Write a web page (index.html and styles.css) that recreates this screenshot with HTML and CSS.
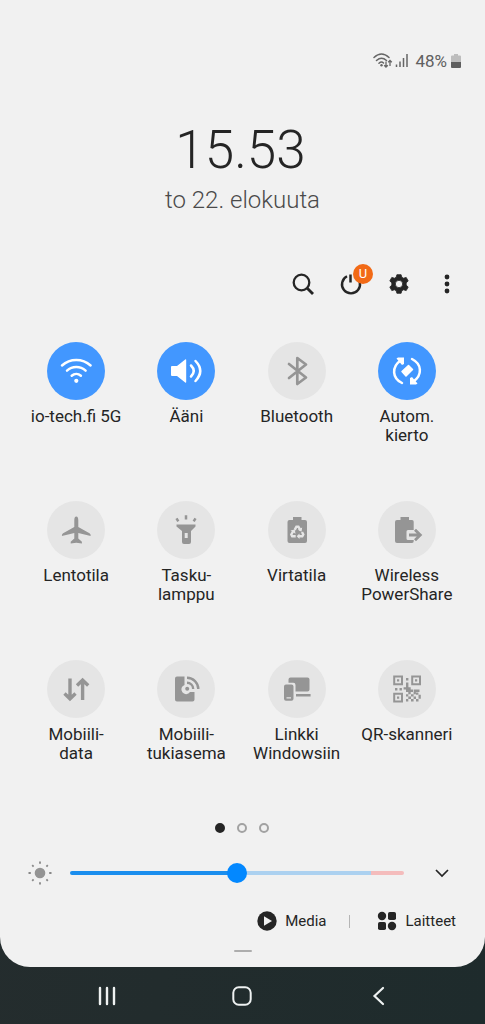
FILE: index.html
```html
<!DOCTYPE html>
<html lang="fi">
<head>
<meta charset="utf-8">
<meta name="viewport" content="width=device-width, initial-scale=1">
<title>Pika-asetukset</title>
<link rel="stylesheet" href="styles.css">
</head>
<body>
<main class="panel">
  <div class="status">
    <svg class="status-wifi" viewBox="0 0 20 18" aria-hidden="true">
      <g fill="none" stroke="#666" stroke-width="1.5" stroke-linecap="round">
        <path d="M1 5.500Q8.500-1.500 16 5.500M3.500 8.500Q8.500 4 13.500 8.500M6 11.300Q8.500 9 10.500 11"/>
      </g>
      <circle cx="8.500" cy="13.300" r="1.200" fill="#666"/>
      <path d="M13 9.500v5.500M11.200 13.200 13 15l1.800-1.800M17 14V8.500M15.200 10.300 17 8.500l1.800 1.800" fill="none" stroke="#666" stroke-width="1.300"/>
    </svg>
    <svg class="status-signal" viewBox="0 0 14 18" aria-hidden="true">
      <path d="M1.500 12.500V15M5 9.500V15M8.500 6V15M12 2V15" stroke="#666" stroke-width="1.500"/>
    </svg>
    <span class="status-text">48%</span>
    <svg class="status-battery" viewBox="0 0 10 18" aria-hidden="true">
      <path d="M3 2h4v1.500h2q1 0 1 1V10H0V4.500q0-1 1-1h2z" fill="#bdbdbd"/>
      <path d="M0 10h10v5q0 1-1 1H1q-1 0-1-1z" fill="#5e5e5e"/>
    </svg>
  </div>

  <header class="clock">
    <time class="clock-time">15.53</time>
    <p class="clock-date">to 22. elokuuta</p>
  </header>

  <div class="actions">
    <button class="action" aria-label="Haku">
      <svg viewBox="0 0 24 24"><circle cx="10.500" cy="10.500" r="7.800" fill="none" stroke="#252525" stroke-width="2.300"/><path d="m16 16 6 6" stroke="#252525" stroke-width="2.800"/></svg>
    </button>
    <button class="action" aria-label="Virta">
      <svg viewBox="0 0 24 24"><path d="M8 4.300A9 9 0 1 0 16 4.300" fill="none" stroke="#252525" stroke-width="2.400"/><path d="M11.500 2.500v8" stroke="#252525" stroke-width="2.500"/></svg>
      <span class="badge">U</span>
    </button>
    <button class="action" aria-label="Asetukset">
      <svg viewBox="0 0 24 24"><path fill="#252525" fill-rule="evenodd" stroke="#252525" stroke-width=".8" stroke-linejoin="round" d="M9.900 2.700h4.200l.7 2.500 1.700 1 2.700-.8 2 3.500-2 2v2.200l2 2-2 3.500-2.700-.8-1.700 1-.7 2.500H9.900l-.7-2.500-1.700-1-2.700.8-2-3.500 2-2v-2.200l-2-2 2-3.500 2.700.8 1.700-1zM12 8.300a3.700 3.700 0 1 0 0 7.400 3.700 3.700 0 0 0 0-7.400z"/></svg>
    </button>
    <button class="action" aria-label="Lisää">
      <svg viewBox="0 0 24 24"><g fill="#252525"><circle cx="12" cy="5" r="2.400"/><circle cx="12" cy="12" r="2.400"/><circle cx="12" cy="19" r="2.400"/></g></svg>
    </button>
  </div>

  <section class="tiles" aria-label="Pikavalinnat">
    <button class="tile tile-on">
      <svg class="tile-icon" viewBox="0 0 58 58"><g fill="none" stroke="currentColor" stroke-width="2.500" stroke-linecap="round"><path d="M15 23.500a21.500 21.500 0 0 1 28.600 0M20 28.600a14 14 0 0 1 18.600 0M24.700 33.700a7 7 0 0 1 9.200 0"/></g><circle cx="29.300" cy="38.800" r="2.100" fill="currentColor"/></svg>
      <span class="tile-label">io-tech.fi 5G</span>
    </button>
    <button class="tile tile-on">
      <svg class="tile-icon" viewBox="0 0 58 58"><path fill="currentColor" d="M15 24h5l8.200-6.600q1-.6 1 .6v22q0 1.200-1 .6L20 34h-5q-1 0-1-1v-8q0-1 1-1z"/><path d="M34 23.500q5.500 5.500 0 11M38.500 19q9.500 9.700 0 20" fill="none" stroke="currentColor" stroke-width="2.500" stroke-linecap="round"/></svg>
      <span class="tile-label">Ääni</span>
    </button>
    <button class="tile">
      <svg class="tile-icon" viewBox="0 0 58 58"><path d="m21 22 17 13.500-8.700 6.500V16l8.700 6.500L21 36" fill="none" stroke="currentColor" stroke-width="2.700" stroke-linejoin="round" stroke-linecap="round"/></svg>
      <span class="tile-label">Bluetooth</span>
    </button>
    <button class="tile tile-on">
      <svg class="tile-icon" viewBox="0 0 58 58"><path d="M24 41C14 36 13.500 25 22.500 18.500M34 17C44 22 44.500 33 35.500 39.500" fill="none" stroke="currentColor" stroke-width="2.500" stroke-linecap="round"/><path fill="currentColor" d="M18.500 16.500 20 15.500h6v6.500l-2 1zM39.500 41.500l-1.500 1h-6V36l2-1z"/><path d="m30.500 23.500 4 4-6.500 6.500-4-4.500z" fill="currentColor" stroke="currentColor" stroke-width="1.500" stroke-linejoin="round"/></svg>
      <span class="tile-label">Autom.<br>kierto</span>
    </button>

    <button class="tile">
      <svg class="tile-icon" viewBox="0 0 58 58"><path fill="currentColor" d="M29.300 15.500c1.300 0 2 1.500 2 4v6.500l11.200 6.200q1.300.7 1.200 2.800l-12.400-3v5.500l3.600 3.200v1.800l-5.600-.8-5.600.8v-1.800l3.600-3.200V32l-12.400 3q-.1-2.100 1.200-2.800l11.200-6.200v-6.500c0-2.500.7-4 2-4z"/></svg>
      <span class="tile-label">Lentotila</span>
    </button>
    <button class="tile">
      <svg class="tile-icon" viewBox="0 0 58 58"><path fill="currentColor" fill-rule="evenodd" d="M19.500 23.500h19v2L34 30v11q0 2-2 2h-5q-2 0-2-2V30l-5.500-4.500zM27.700 32v5h3v-5z"/><path d="M29 14.300v4.200M19.500 17.300l1.800 3M38.500 17.300l-1.800 3" stroke="currentColor" stroke-width="2.500"/></svg>
      <span class="tile-label">Tasku-<br>lamppu</span>
    </button>
    <button class="tile">
      <svg class="tile-icon" viewBox="0 0 58 58"><path fill="currentColor" d="M25 16h8.500v3H37q2 0 2 2v19q0 2-2 2H21.500q-2 0-2-2V21q0-2 2-2H25z"/><g fill="none" stroke="#e5e5e5" stroke-width="2.400"><path d="m26.700 28.800 1.700-3.100h2l2 3.500M34 31l1.300 2.500-1 1.800h-4M27.700 35.300h-3.500l-.9-1.800 2-3.500"/></g><path fill="#e5e5e5" d="m34.200 26.500-.7 4.300-3.700-2zM31.500 32.500v5.600L28.700 35.300zM22.500 29.500l4.300-1 .7 4.200z"/></svg>
      <span class="tile-label">Virtatila</span>
    </button>
    <button class="tile">
      <svg class="tile-icon" viewBox="0 0 58 58"><path fill="currentColor" d="M22.500 16H31v3h3q1.700 0 1.700 1.700V29H30q-1.500 0-1.500 1.500v7q0 1.500 1.500 1.500h5.700v1.300q0 1.700-1.700 1.700H19q-2 0-2-2V21q0-2 2-2h3.500z"/><path d="M31 34h11.500M37 28.800l5.300 5.200-5.300 5.200" fill="none" stroke="currentColor" stroke-width="2.800"/></svg>
      <span class="tile-label">Wireless<br>PowerShare</span>
    </button>

    <button class="tile">
      <svg class="tile-icon" viewBox="0 0 58 58"><path d="M23 18.500V38M17.500 33.500l5.500 5.300 5.500-5.300M35.600 40V20.500M30 25.500l5.600-5.300 5.600 5.300" fill="none" stroke="currentColor" stroke-width="3.400"/></svg>
      <span class="tile-label">Mobiili-<br>data</span>
    </button>
    <button class="tile">
      <svg class="tile-icon" viewBox="0 0 58 58"><path fill="currentColor" d="M20 16.500h7.500V25A4.700 4.700 0 1 0 33 32h4.500v7.500q0 2-2 2H20q-2 0-2-2v-21q0-2 2-2z"/><circle cx="30.200" cy="28.700" r="2" fill="currentColor"/><path d="M30 22.700a6.200 6.200 0 0 1 6.200 6.200M30 17.800A11.200 11.200 0 0 1 41.300 29" fill="none" stroke="currentColor" stroke-width="2.400"/></svg>
      <span class="tile-label">Mobiili-<br>tukiasema</span>
    </button>
    <button class="tile">
      <svg class="tile-icon" viewBox="0 0 58 58"><path fill="currentColor" d="M20.500 22.800V19.500q0-2 2-2H39.500q2 0 2 2v10q0 2-2 2H27.500V25q0-2.200-2.200-2.200z"/><path fill="currentColor" fill-rule="evenodd" d="M18 24.500h5.500q2 0 2 2v12.200q0 2-2 2H18q-2 0-2-2V26.500q0-2 2-2zm.5 12.700v1.300H23v-1.300z"/><path d="M28 35.300h14.600" stroke="currentColor" stroke-width="2.400"/></svg>
      <span class="tile-label">Linkki<br>Windowsiin</span>
    </button>
    <button class="tile">
      <svg class="tile-icon" viewBox="0 0 58 58"><g fill="none" stroke="currentColor" stroke-width="2"><path d="M16.200 16.500h7.800v7.800h-7.800zM34.200 16.500H42v7.800h-7.800zM16.200 33.800h7.800v7.800h-7.800z"/></g><path fill="currentColor" d="M19 19.300h2.200v2.200H19zM37 19.300h2.200v2.200H37zM19 36.600h2.200v2.200H19zM28 18h2.400v2.400H28zM28 22.500h2.400v4.700h2.300v2.300h2.600v2.400h-2.600v2.400h-2.400v-2.400H28v-2.400h-2.400v-2.300H28zM17 28h2.400v2.400H17zM21.500 28h2.400v2.400h-2.400zM36 29.500h5.500v2.400H36zM28 34.200h2.300v2.400H28zM33 34.200h2.600v2.400H33zM38 32.500h2.400v2.300H38zM40.500 34.800h2.300v4h-2.300zM30.300 36.600h2.700V39h-2.700zM35.600 36.600H38V39h-2.400zM28 39h2.300v2.600H28zM33 39h2.600v2.600H33zM38 39h2.500v2.600H38zM35.600 31.900h2.300v2.300h-2.300z"/></svg>
      <span class="tile-label">QR-skanneri</span>
    </button>
  </section>

  <div class="pager" aria-label="Sivu 1/3"><i class="dot dot-current"></i><i class="dot"></i><i class="dot"></i></div>

  <div class="brightness">
    <svg class="sun" viewBox="0 0 24 24" aria-hidden="true"><circle cx="12" cy="12" r="5.300" fill="#949494"/><path d="M12 .5v2.300M12 21.200v2.300M.5 12h2.300M21.200 12h2.300M4.200 4.200l1.400 1.400M18.400 18.400l1.400 1.400M19.800 4.200l-1.400 1.400M5.600 18.400l-1.400 1.400" stroke="#888" stroke-width="1.800"/></svg>
    <input class="slider" type="range" min="0" max="100" value="50" aria-label="Kirkkaus">
    <button class="expand" aria-label="Laajenna"><svg viewBox="0 0 16 16"><path d="m2 5 6 6 6-6" fill="none" stroke="#252525" stroke-width="1.700"/></svg></button>
  </div>

  <div class="shortcuts">
    <button class="shortcut">
      <svg viewBox="0 0 20 20"><circle cx="10" cy="10" r="9.700" fill="#252525"/><path d="m7 5.300 8 4.700-8 4.700z" fill="#f1f1f1"/></svg>
      <span>Media</span>
    </button>
    <i class="divider"></i>
    <button class="shortcut">
      <svg viewBox="0 0 20 20"><g fill="#252525"><circle cx="5" cy="5" r="4.200"/><rect x="11" y="1" width="8" height="8" rx="1.800"/><rect x="1" y="11" width="8" height="8" rx="1.800"/><circle cx="15" cy="15" r="4.200"/></g></svg>
      <span>Laitteet</span>
    </button>
  </div>
  <div class="handle"></div>
</main>

<nav class="navbar">
  <button class="nav" aria-label="Viimeisimmät"><svg viewBox="0 0 24 24"><path d="M5 4v16M12 4v16M19 4v16" stroke="#eef1f1" stroke-width="2.400" stroke-linecap="round"/></svg></button>
  <button class="nav" aria-label="Aloitusnäyttö"><svg viewBox="0 0 24 24"><rect x="3.300" y="3.300" width="17.400" height="17.400" rx="5.500" fill="none" stroke="#eef1f1" stroke-width="2"/></svg></button>
  <button class="nav" aria-label="Takaisin"><svg viewBox="0 0 24 24"><path d="M17 4 8.500 12l8.500 8" fill="none" stroke="#eef1f1" stroke-width="2.200" stroke-linecap="round"/></svg></button>
</nav>
</body>
</html>
```
FILE: styles.css
```css
* {
  box-sizing: border-box;
}

body {
  margin: 0;
  min-height: 100vh;
  display: flex;
  flex-direction: column;
  background: linear-gradient(100deg, #262d2e, #1e2b2c);
  color: #252525;
  font-family: Roboto, "Liberation Sans", sans-serif;
}

button {
  padding: 0;
  border: 0;
  background: none;
  color: inherit;
  font: inherit;
}

svg {
  display: block;
}

.panel {
  flex: 1;
  display: flex;
  flex-direction: column;
  padding-top: 51px;
  background: #f1f1f1;
  border-radius: 0 0 30px 30px;
}

.status {
  display: flex;
  justify-content: flex-end;
  align-items: center;
  height: 20px;
  padding-right: 24px;
  color: #606060;
  font-size: 17px;
  line-height: 20px;
}

.status-wifi {
  width: 20px;
  height: 18px;
}

.status-signal {
  width: 14px;
  height: 18px;
  margin: 0 6px 0 2px;
}

.status-battery {
  width: 10px;
  height: 18px;
  margin-left: 4px;
}

.clock {
  padding-top: 47px;
  text-align: center;
  font-weight: 300;
}

.clock-time {
  display: block;
  padding-right: 4px;
  font-size: 53px;
  line-height: 64px;
}

.clock-date {
  margin: 4px 0 0;
  color: #4a4a4a;
  font-size: 24px;
  line-height: 29px;
}

.actions {
  display: flex;
  justify-content: flex-end;
  gap: 24px;
  padding: 57px 26px 0 0;
}

.action {
  position: relative;
  width: 24px;
  height: 24px;
}

.badge {
  position: absolute;
  top: -8px;
  left: 14px;
  width: 20px;
  height: 20px;
  border-radius: 50%;
  background: #f26a16;
  color: #fff;
  font-size: 13px;
  line-height: 20px;
}

.tiles {
  display: grid;
  grid-template-columns: repeat(4, 1fr);
  grid-auto-rows: minmax(104px, auto);
  row-gap: 55px;
  padding: 46px 23px 0 21px;
}

.tile {
  display: flex;
  flex-direction: column;
  align-items: center;
  gap: 7px;
  font-size: 17px;
  line-height: 19px;
}

.tile-icon {
  width: 58px;
  height: 58px;
  border-radius: 50%;
  background: #e5e5e5;
  color: #959595;
}

.tile-on .tile-icon {
  background: #4297ff;
  color: #fff;
}

.tile-label {
  white-space: nowrap;
}

.pager {
  display: flex;
  justify-content: center;
  gap: 12px;
  padding: 59px 1px 0 0;
}

.dot {
  width: 10px;
  height: 10px;
  border: 2px solid #a2a2a2;
  border-radius: 50%;
}

.dot-current {
  border-color: #252525;
  background: #252525;
}

.brightness {
  display: flex;
  align-items: center;
  padding: 28px 35px 0 28px;
}

.sun {
  width: 24px;
  height: 24px;
}

.slider {
  appearance: none;
  flex: 1;
  min-width: 0;
  height: 24px;
  margin: 0 30px 0 18px;
  background: none;
}

.slider::-webkit-slider-runnable-track {
  height: 4px;
  border-radius: 2px;
  background: linear-gradient(90deg, #1b8eee 50%, #acd1f0 50% 90%, #f4bcbc 90%);
}

.slider::-webkit-slider-thumb {
  appearance: none;
  width: 20px;
  height: 20px;
  margin-top: -8px;
  border-radius: 50%;
  background: #0388ff;
}

.expand svg {
  width: 16px;
  height: 16px;
}

.shortcuts {
  display: flex;
  justify-content: flex-end;
  align-items: center;
  gap: 23px;
  padding: 26px 29px 0 0;
}

.shortcut {
  display: flex;
  align-items: center;
  gap: 8px;
  font-size: 15px;
  line-height: 20px;
}

.shortcut svg {
  width: 20px;
  height: 20px;
}

.divider {
  width: 1px;
  height: 13px;
  margin-right: 4px;
  background: #b5b5b5;
}

.handle {
  width: 18px;
  height: 2px;
  margin: 19px auto 15px;
  border-radius: 1px;
  background: #adadad;
}

.navbar {
  display: grid;
  grid-template-columns: repeat(3, 1fr);
  padding: 17px 39px 16px;
}

.nav {
  display: flex;
  justify-content: center;
}

.nav svg {
  width: 24px;
  height: 24px;
}
```
